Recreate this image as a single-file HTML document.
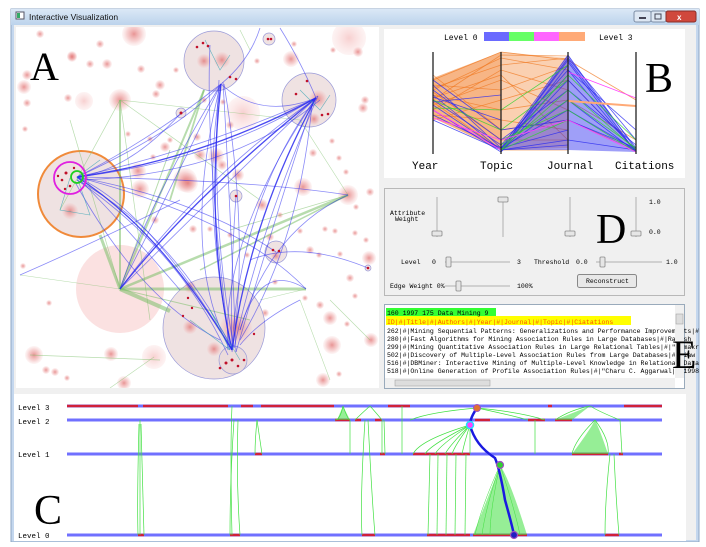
<!DOCTYPE html>
<html><head><meta charset="utf-8"><style>
html,body{margin:0;padding:0;background:#fff;width:706px;height:547px;overflow:hidden}
svg{display:block}
text{font-family:"Liberation Mono",monospace}
</style></head><body>
<svg width="706" height="547" viewBox="0 0 706 547" xmlns="http://www.w3.org/2000/svg">
<defs>
<radialGradient id="pk"><stop offset="0" stop-color="#e07070" stop-opacity=".75"/><stop offset=".6" stop-color="#ec9a9a" stop-opacity=".45"/><stop offset="1" stop-color="#f4c0c0" stop-opacity=".15"/></radialGradient>
<radialGradient id="pk2"><stop offset="0" stop-color="#f0a0a0" stop-opacity=".5"/><stop offset="1" stop-color="#f8d0d0" stop-opacity=".25"/></radialGradient>
<linearGradient id="tb" x1="0" y1="0" x2="0" y2="1"><stop offset="0" stop-color="#dbe8f6"/><stop offset="1" stop-color="#bcd3ec"/></linearGradient>
</defs>
<!-- window frame -->
<rect x="11" y="9" width="688" height="533" fill="#c4d7ee" stroke="#8fa7c4"/>
<rect x="11" y="9" width="688" height="16" fill="url(#tb)"/>
<rect x="16" y="12" width="8" height="7" fill="#fff" stroke="#556"/>
<rect x="17" y="13" width="3" height="5" fill="#3a6"/>
<text x="29" y="20" font-family="Liberation Sans" font-size="8.5" fill="#111" style="font-family:'Liberation Sans',sans-serif">Interactive Visualization</text>
<rect x="634" y="11" width="17" height="11" rx="2" fill="#dde7f3" stroke="#7d8ea6"/>
<rect x="651" y="11" width="15" height="11" rx="2" fill="#dde7f3" stroke="#7d8ea6"/>
<rect x="666" y="11" width="30" height="11" rx="2" fill="#d0483c" stroke="#8a2e28"/>
<text x="677" y="20" font-size="8" fill="#fff" font-weight="bold" style="font-family:'Liberation Sans',sans-serif">x</text>
<rect x="639" y="17" width="7" height="2" fill="#445"/>
<rect x="655" y="14" width="6" height="5" fill="none" stroke="#445"/>
<!-- client background -->
<rect x="14" y="25" width="682" height="515" fill="#f0f0f0"/>

<!-- PANEL A -->
<rect x="16" y="27" width="363" height="361" fill="#fff"/>
<g clip-path="url(#ca)">
<clipPath id="ca"><rect x="16" y="27" width="363" height="361"/></clipPath>
<!-- pink scattered -->
<g fill="url(#pk)">
<circle cx="40" cy="34" r="4"/><circle cx="134" cy="34" r="12"/><circle cx="100" cy="44" r="4"/><circle cx="72" cy="56" r="5"/>
<circle cx="72" cy="57" r="5"/><circle cx="90" cy="64" r="4"/><circle cx="107" cy="64" r="5"/><circle cx="141" cy="69" r="4"/>
<circle cx="27" cy="75" r="5"/><circle cx="24" cy="87" r="7"/><circle cx="160" cy="85" r="5"/><circle cx="156" cy="94" r="4"/>
<circle cx="68" cy="98" r="4"/><circle cx="84" cy="101" r="9" fill="url(#pk2)"/><circle cx="120" cy="100" r="11"/><circle cx="27" cy="103" r="4"/>
<circle cx="243" cy="113" r="17" fill="url(#pk2)"/><circle cx="223" cy="102" r="3"/><circle cx="365" cy="100" r="4"/><circle cx="363" cy="108" r="5"/>
<circle cx="291" cy="59" r="8"/><circle cx="349" cy="38" r="17" fill="url(#pk2)"/><circle cx="358" cy="52" r="5"/><circle cx="333" cy="50" r="3"/><circle cx="257" cy="61" r="3"/><circle cx="294" cy="44" r="3"/>
<circle cx="25" cy="129" r="3"/><circle cx="128" cy="134" r="3"/><circle cx="150" cy="139" r="3"/><circle cx="170" cy="140" r="3"/>
<circle cx="165" cy="147" r="5"/><circle cx="200" cy="155" r="6"/><circle cx="216" cy="156" r="8"/><circle cx="153" cy="157" r="3"/>
<circle cx="313" cy="153" r="4"/><circle cx="339" cy="158" r="3"/><circle cx="332" cy="141" r="3"/><circle cx="346" cy="172" r="3"/>
<circle cx="138" cy="171" r="8"/><circle cx="185" cy="180" r="12"/><circle cx="188" cy="183" r="10"/><circle cx="140" cy="189" r="9"/>
<circle cx="222" cy="165" r="5"/><circle cx="238" cy="175" r="6"/><circle cx="303" cy="187" r="9"/><circle cx="348" cy="195" r="10"/>
<circle cx="370" cy="192" r="4"/><circle cx="356" cy="207" r="3"/><circle cx="262" cy="205" r="6"/><circle cx="280" cy="215" r="3"/>
<circle cx="155" cy="220" r="4"/><circle cx="193" cy="229" r="4"/><circle cx="210" cy="229" r="3"/><circle cx="230" cy="235" r="3"/>
<circle cx="270" cy="237" r="4"/><circle cx="300" cy="231" r="3"/><circle cx="325" cy="229" r="3"/><circle cx="335" cy="231" r="3"/>
<circle cx="355" cy="233" r="3"/><circle cx="366" cy="240" r="3"/><circle cx="310" cy="250" r="4"/><circle cx="319" cy="255" r="3"/>
<circle cx="340" cy="254" r="3"/><circle cx="369" cy="258" r="7"/><circle cx="23" cy="266" r="3"/><circle cx="350" cy="278" r="4"/>
<circle cx="355" cy="296" r="3"/><circle cx="320" cy="305" r="4"/><circle cx="330" cy="318" r="7"/><circle cx="347" cy="324" r="3"/>
<circle cx="371" cy="340" r="7"/><circle cx="332" cy="345" r="9"/><circle cx="49" cy="303" r="3"/><circle cx="34" cy="355" r="9"/>
<circle cx="111" cy="354" r="7"/><circle cx="154" cy="357" r="12" fill="url(#pk2)"/><circle cx="46" cy="370" r="4"/><circle cx="55" cy="372" r="4"/>
<circle cx="67" cy="378" r="3"/><circle cx="124" cy="383" r="7"/><circle cx="323" cy="380" r="7"/><circle cx="339" cy="374" r="3"/>
<circle cx="265" cy="313" r="4"/><circle cx="275" cy="282" r="3"/><circle cx="305" cy="298" r="3"/><circle cx="247" cy="255" r="3"/>
<circle cx="176" cy="70" r="3"/><circle cx="204" cy="100" r="3"/><circle cx="197" cy="137" r="4"/><circle cx="230" cy="125" r="4"/>
</g>
<circle cx="120" cy="289" r="44" fill="#f8c8c8" fill-opacity=".55"/>
<!-- cluster circles -->
<g fill="#e9d8d8" fill-opacity=".75" stroke="#9a9ad8" stroke-width=".7">
<circle cx="214" cy="61" r="30"/><circle cx="309" cy="100" r="27"/><circle cx="214" cy="328" r="51"/>
<circle cx="269" cy="39" r="6"/><circle cx="181" cy="113" r="5"/><circle cx="236" cy="196" r="6"/><circle cx="276" cy="252" r="11"/><circle cx="233" cy="360" r="14"/><circle cx="368" cy="268" r="3"/>
</g>
<circle cx="81" cy="194" r="43" fill="#efe2e2" stroke="#f08a3a" stroke-width="2"/>
<g fill="url(#pk)"><circle cx="222" cy="60" r="8"/><circle cx="204" cy="61" r="7"/><circle cx="318" cy="99" r="9"/><circle cx="314" cy="119" r="6"/><circle cx="236" cy="328" r="16"/><circle cx="190" cy="327" r="7"/><circle cx="214" cy="349" r="7"/><circle cx="70" cy="211" r="8"/><circle cx="190" cy="287" r="6"/><circle cx="276" cy="256" r="5"/></g>
<!-- green edges -->
<g fill="none" stroke="#7cbf6a" stroke-opacity=".55">
<path d="M120 289 L120 100" stroke-width="2"/><path d="M120 289 L306 289" stroke-width="3"/><path d="M120 289 L170 311" stroke-width="4"/><path d="M120 289 L348 195" stroke-width="2.5"/>
<path d="M120 289 L100 235" stroke-width="3"/><path d="M120 289 L204 90" stroke-width="2"/><path d="M120 289 L170 150" stroke-width="1"/><path d="M120 289 L70 120" stroke-width=".7"/>
<path d="M120 289 L20 275" stroke-width=".6"/><path d="M120 289 L250 320" stroke-width="1"/><path d="M120 100 L260 200" stroke-width=".7"/><path d="M120 100 L60 210" stroke-width=".7"/>
<path d="M120 100 L300 120" stroke-width=".6"/><path d="M120 100 L150 320" stroke-width=".7"/><path d="M348 195 L230 230" stroke-width=".8"/><path d="M348 195 L200 270" stroke-width="1.5"/>
<path d="M348 195 L300 120" stroke-width=".6"/><path d="M306 289 L260 300" stroke-width=".6"/><path d="M30 355 L160 360" stroke-width=".8"/><path d="M154 357 L110 388" stroke-width=".6"/>
<path d="M204 90 L170 200" stroke-width="1.8"/><path d="M330 380 L300 300" stroke-width=".6"/><path d="M370 340 L330 300" stroke-width=".6"/><path d="M250 50 L240 30" stroke-width=".6"/>
</g>
<!-- blue edges -->
<g fill="none" stroke="#2a2af0" stroke-width=".8" stroke-opacity=".55">
<path d="M77 177 Q200 150 316 98"/><path d="M77 177 Q220 160 318 96"/><path d="M80 180 Q230 175 320 100"/><path d="M77 177 Q180 130 221 84"/>
<path d="M77 177 Q150 210 232 350"/><path d="M77 180 Q170 230 230 345"/><path d="M77 180 Q180 250 228 355"/><path d="M75 182 Q140 300 220 340"/>
<path d="M77 177 Q250 180 348 195"/><path d="M77 177 Q240 220 306 289"/><path d="M221 84 Q200 200 232 350"/><path d="M219 80 Q210 220 234 348"/>
<path d="M223 82 Q230 200 236 352"/><path d="M220 86 Q180 250 228 346"/><path d="M224 84 Q250 240 232 352"/><path d="M316 98 Q240 200 232 350"/>
<path d="M318 96 Q260 230 234 348"/><path d="M314 100 Q280 200 236 352"/><path d="M316 98 Q220 240 228 350"/><path d="M312 104 Q300 240 240 340"/>
<path d="M120 289 Q200 180 316 98"/><path d="M120 289 Q180 170 221 84"/><path d="M120 289 Q150 200 221 84"/><path d="M120 289 Q250 160 316 98"/>
<path d="M20 275 Q100 240 180 200"/><path d="M348 195 Q270 230 240 330"/><path d="M368 268 Q300 240 250 260"/><path d="M306 289 Q260 260 240 330"/>
<path d="M221 84 Q260 120 316 98"/><path d="M221 84 Q150 140 77 177"/><path d="M77 177 Q120 220 180 290"/><path d="M77 177 Q200 200 276 252"/>
<path d="M236 196 Q230 280 232 350"/><path d="M210 45 Q205 150 230 350"/><path d="M77 177 Q130 170 181 113"/><path d="M300 300 Q260 320 240 345"/>
<path d="M260 28 Q250 60 221 84"/><path d="M280 28 Q300 60 316 98"/>
</g>
<g fill="none" stroke="#2a2af0" stroke-width="1.3" stroke-opacity=".85">
<path d="M77 177 Q200 160 316 98"/><path d="M221 84 Q205 230 232 350"/><path d="M316 98 Q250 220 232 350"/><path d="M120 289 Q190 200 316 98"/><path d="M77 177 Q160 230 232 350"/>
</g>
<g fill="none" stroke="#2aa0b0" stroke-width=".6" stroke-opacity=".7">
<path d="M70 178 L60 210 L90 215 L77 177 L100 160"/><path d="M190 320 L230 350 L210 310 L240 360"/><path d="M205 40 L220 70 L230 55"/><path d="M300 90 L320 110 L330 95"/>
</g>
<!-- red nodes -->
<g fill="#c0102a">
<circle cx="66" cy="173" r="1.5"/><circle cx="62" cy="180" r="1.3"/><circle cx="70" cy="186" r="1.3"/><circle cx="58" cy="176" r="1.2"/><circle cx="74" cy="168" r="1.2"/><circle cx="65" cy="189" r="1.2"/>
<circle cx="203" cy="43" r="1.3"/><circle cx="197" cy="47" r="1.3"/><circle cx="208" cy="46" r="1.3"/><circle cx="230" cy="77" r="1.3"/><circle cx="236" cy="79" r="1.3"/>
<circle cx="307" cy="81" r="1.3"/><circle cx="296" cy="94" r="1.3"/><circle cx="328" cy="114" r="1.3"/><circle cx="322" cy="115" r="1.3"/>
<circle cx="226" cy="363" r="1.5"/><circle cx="232" cy="360" r="1.5"/><circle cx="238" cy="366" r="1.3"/><circle cx="220" cy="368" r="1.3"/><circle cx="244" cy="360" r="1.3"/>
<circle cx="268" cy="39" r="1.3"/><circle cx="271" cy="39" r="1.3"/><circle cx="181" cy="113" r="1.5"/><circle cx="236" cy="196" r="1.3"/><circle cx="273" cy="250" r="1.3"/><circle cx="279" cy="251" r="1.3"/><circle cx="368" cy="268" r="1.3"/>
<circle cx="188" cy="298" r="1.2"/><circle cx="192" cy="308" r="1.2"/><circle cx="183" cy="316" r="1.2"/><circle cx="254" cy="334" r="1.2"/>
</g>
<circle cx="70" cy="178" r="16" fill="none" stroke="#e020e0" stroke-width="1.8"/>
<circle cx="77" cy="177" r="6" fill="none" stroke="#20d020" stroke-width="1.8"/>
</g>
<text x="30" y="80" font-size="40" style="font-family:'Liberation Serif',serif">A</text>

<!-- PANEL B -->
<rect x="384" y="29" width="301" height="149" fill="#fff"/>
<text x="444" y="40" font-size="8">Level 0</text>
<rect x="484" y="32" width="25" height="9" fill="#6a6aff"/><rect x="509" y="32" width="25" height="9" fill="#66ff66"/><rect x="534" y="32" width="25" height="9" fill="#ff66ff"/><rect x="559" y="32" width="26" height="9" fill="#ffaa77"/>
<text x="599" y="40" font-size="8">Level 3</text>
<g fill="none" stroke-width=".8">
<g stroke="#f07820" stroke-opacity=".7">
<path d="M433 80 L501 52 L568 60"/><path d="M433 90 L501 58 L568 70"/><path d="M433 100 L501 55 L568 56"/><path d="M433 110 L501 70 L568 90"/>
<path d="M433 85 L501 90 L568 66"/><path d="M433 95 L501 110 L568 100"/><path d="M433 105 L501 80 L568 110"/><path d="M433 115 L501 120 L568 130"/>
<path d="M433 75 L501 130 L568 120"/><path d="M433 120 L501 100 L568 80"/><path d="M433 88 L501 65 L568 58"/><path d="M433 92 L501 140 L568 140"/>
<path d="M433 98 L501 75 L568 140"/><path d="M433 102 L501 150 L568 150"/><path d="M568 60 L636 100"/><path d="M568 100 L636 140"/><path d="M568 120 L636 150"/><path d="M568 80 L636 150"/>
</g>
<polygon points="433,78 501,52 501,150 433,118" fill="#f07820" fill-opacity=".55" stroke="none"/>
<polygon points="501,52 568,58 568,148 501,150" fill="#f07820" fill-opacity=".35" stroke="none"/>
<g stroke="#2a2af0" stroke-opacity=".8">
<path d="M433 85 L501 148 L568 55 L636 150"/><path d="M433 95 L501 150 L568 60 L636 148"/><path d="M433 100 L501 145 L568 70 L636 152"/><path d="M433 110 L501 152 L568 80 L636 150"/>
<path d="M433 90 L501 140 L568 90 L636 145"/><path d="M433 105 L501 150 L568 100 L636 152"/><path d="M433 115 L501 148 L568 110 L636 150"/><path d="M433 80 L501 130 L568 120 L636 148"/>
<path d="M433 120 L501 150 L568 140 L636 150"/><path d="M501 150 L568 58"/><path d="M501 152 L568 65"/><path d="M501 148 L568 75"/><path d="M501 150 L568 145"/>
<path d="M501 148 L568 130"/><path d="M568 58 L636 140"/><path d="M568 62 L636 152"/><path d="M568 70 L636 130"/><path d="M433 97 L501 120"/><path d="M433 102 L501 95"/>
</g>
<polygon points="501,150 568,55 636,152 568,150" fill="#2a2af0" fill-opacity=".45" stroke="none"/>
<g stroke="#30d030" stroke-opacity=".8">
<path d="M501 150 L568 90 L636 150"/><path d="M501 145 L568 100 L636 148"/><path d="M501 140 L568 110 L636 152"/><path d="M501 150 L568 120"/><path d="M433 100 L501 130 L568 80"/><path d="M501 150 L568 75 L636 140"/><path d="M433 108 L501 110 L568 65"/>
</g>
<g stroke="#ff40ff"><path d="M433 118 L501 140 L568 120 L636 152"/><path d="M568 72 L636 98"/><path d="M433 110 L501 150"/></g>
<path d="M568 101 L636 106" stroke="#ffaa77" stroke-width="2"/>
</g>
<g stroke="#222" stroke-width="1.3"><line x1="433" y1="52" x2="433" y2="154"/><line x1="501" y1="52" x2="501" y2="154"/><line x1="568" y1="52" x2="568" y2="154"/><line x1="636" y1="52" x2="636" y2="154"/></g>
<g font-size="11"><text x="412" y="169">Year</text><text x="480" y="169">Topic</text><text x="547" y="169">Journal</text><text x="615" y="169">Citations</text></g>
<text x="645" y="92" font-size="42" style="font-family:'Liberation Serif',serif">B</text>

<!-- PANEL D -->
<rect x="384.5" y="188.5" width="300" height="107" fill="#f0f0f0" stroke="#b8b8b8"/>
<g stroke="#b0b0b0"><line x1="437" y1="197" x2="437" y2="237"/><line x1="503" y1="197" x2="503" y2="237"/><line x1="570" y1="197" x2="570" y2="237"/><line x1="636" y1="197" x2="636" y2="237"/></g>
<g fill="#e6e6e6" stroke="#888" stroke-width=".8"><rect x="432" y="231" width="10" height="5" rx="1"/><rect x="498" y="197" width="10" height="5" rx="1"/><rect x="565" y="231" width="10" height="5" rx="1"/><rect x="631" y="231" width="10" height="5" rx="1"/></g>
<g font-size="6.5"><text x="390" y="215">Attribute</text><text x="395" y="221">Weight</text>
<text x="649" y="204">1.0</text><text x="649" y="234">0.0</text>
<text x="401" y="264">Level</text><text x="432" y="264">0</text><text x="517" y="264">3</text>
<text x="534" y="264">Threshold</text><text x="576" y="264">0.0</text><text x="666" y="264">1.0</text>
<text x="390" y="288">Edge Weight 0%</text><text x="517" y="288">100%</text></g>
<g stroke="#b0b0b0"><line x1="445" y1="262" x2="510" y2="262"/><line x1="596" y1="262" x2="662" y2="262"/><line x1="445" y1="286" x2="510" y2="286"/></g>
<g fill="#e6e6e6" stroke="#888" stroke-width=".8"><rect x="446" y="257" width="5" height="10" rx="1"/><rect x="600" y="257" width="5" height="10" rx="1"/><rect x="456" y="281" width="5" height="10" rx="1"/></g>
<rect x="577.5" y="274.5" width="59" height="13" rx="2" fill="#e8e8e8" stroke="#888"/>
<text x="586" y="283" font-size="6.5">Reconstruct</text>
<text x="596" y="243" font-size="42" style="font-family:'Liberation Serif',serif">D</text>

<!-- PANEL E -->
<rect x="384.5" y="304.5" width="300" height="84" fill="#fff" stroke="#9ab"/>
<rect x="386" y="308" width="110" height="8" fill="#33ff33"/>
<rect x="386" y="316" width="245" height="9" fill="#ffff00"/>
<g font-size="6.5"><text x="387" y="315">160 1997 175 Data Mining 9</text>
<text x="387" y="324" fill="#ff5500">ID|#|Title|#|Authors|#|Year|#|Journal|#|Topic|#|Ciatations</text>
<text x="387" y="333">262|#|Mining Sequential Patterns: Generalizations and Performance Improvements|#</text>
<text x="387" y="341">280|#|Fast Algorithms for Mining Association Rules in Large Databases|#|Rakesh</text>
<text x="387" y="349">299|#|Mining Quantitative Association Rules in Large Relational Tables|#|"Ramakr</text>
<text x="387" y="357">502|#|Discovery of Multiple-Level Association Rules from Large Databases|#|Jiaw</text>
<text x="387" y="365">516|#|DBMiner: Interactive Mining of Multiple-Level Knowledge in Relational Data</text>
<text x="387" y="373">518|#|Online Generation of Profile Association Rules|#|"Charu C. Aggarwal|#|1998</text></g>
<rect x="675" y="305" width="9" height="73" fill="#f0f0f0"/><rect x="676" y="314" width="7" height="10" fill="#ddd" stroke="#999" stroke-width=".5"/>
<rect x="385" y="378" width="290" height="10" fill="#f0f0f0"/><rect x="395" y="380" width="95" height="6" fill="#ddd" stroke="#999" stroke-width=".5"/>
<text x="672" y="368" font-size="40" style="font-family:'Liberation Serif',serif">E</text>

<!-- PANEL C -->
<rect x="14" y="394" width="672" height="147" fill="#fff"/>
<g font-size="7.5"><text x="18" y="410">Level 3</text><text x="18" y="424">Level 2</text><text x="18" y="457">Level 1</text><text x="18" y="538">Level 0</text></g>
<g stroke="#7070ff" stroke-width="3"><line x1="67" y1="406" x2="662" y2="406"/><line x1="67" y1="420" x2="662" y2="420"/><line x1="67" y1="454" x2="662" y2="454"/><line x1="67" y1="535" x2="662" y2="535"/></g>
<g stroke="#d0203a" stroke-width="2.5">
<line x1="67" y1="406" x2="138" y2="406"/><line x1="143" y1="406" x2="228" y2="406"/><line x1="241" y1="406" x2="253" y2="406"/><line x1="261" y1="406" x2="334" y2="406"/><line x1="388" y1="406" x2="410" y2="406"/><line x1="548" y1="406" x2="552" y2="406"/><line x1="624" y1="406" x2="662" y2="406"/>
<line x1="335" y1="420" x2="350" y2="420"/><line x1="355" y1="420" x2="361" y2="420"/><line x1="375" y1="420" x2="382" y2="420"/><line x1="475" y1="420" x2="490" y2="420"/><line x1="528" y1="420" x2="545" y2="420"/><line x1="555" y1="420" x2="572" y2="420"/>
<line x1="255" y1="454" x2="262" y2="454"/><line x1="380" y1="454" x2="385" y2="454"/><line x1="413" y1="454" x2="470" y2="454"/><line x1="572" y1="454" x2="608" y2="454"/><line x1="619" y1="454" x2="623" y2="454"/>
<line x1="138" y1="535" x2="144" y2="535"/><line x1="230" y1="535" x2="240" y2="535"/><line x1="362" y1="535" x2="375" y2="535"/><line x1="427" y1="535" x2="470" y2="535"/><line x1="473" y1="535" x2="527" y2="535"/><line x1="605" y1="535" x2="619" y2="535"/>
</g>
<g fill="none" stroke="#40e040" stroke-width=".7">
<path d="M140 420 L140 535"/><path d="M139 424 Q137 500 138 535"/><path d="M141 424 Q143 500 144 535"/>
<path d="M232 406 Q230 450 232 535"/><path d="M238 420 Q236 480 240 535"/><path d="M234 420 Q230 480 230 535"/><path d="M257 420 Q255 440 255 454"/><path d="M257 420 Q260 440 262 454"/>
<path d="M343 406 Q340 420 335 420"/><path d="M343 406 Q348 420 350 420"/><path d="M370 406 Q360 415 355 420"/><path d="M370 406 Q378 415 382 420"/><path d="M350 420 L350 454"/>
<path d="M365 420 Q360 500 362 535"/><path d="M368 420 Q372 500 375 535"/><path d="M382 420 L382 454"/><path d="M384 420 L385 454"/><path d="M402 406 L402 454"/>
<path d="M477 408 Q430 412 410 420"/><path d="M477 408 Q520 412 545 420"/><path d="M477 408 Q510 415 528 420"/>
<path d="M470 425 Q420 440 413 454"/><path d="M470 425 Q430 445 425 454"/><path d="M470 425 Q440 445 435 454"/><path d="M470 425 Q450 445 445 454"/><path d="M470 425 Q455 445 452 454"/><path d="M470 425 Q465 440 462 454"/><path d="M470 425 L470 454"/>
<path d="M430 454 L428 535"/><path d="M438 454 L437 535"/><path d="M447 454 L446 535"/><path d="M456 454 L455 535"/><path d="M466 454 L465 535"/>
<path d="M535 420 L535 454"/><path d="M590 406 Q570 410 555 420"/><path d="M590 406 Q600 412 620 420"/><path d="M595 420 Q575 440 572 454"/><path d="M595 420 Q610 440 608 454"/><path d="M620 420 L622 454"/>
<path d="M610 454 Q605 500 605 535"/><path d="M614 454 Q616 500 619 535"/>
</g>
<g fill="#40e040" fill-opacity=".55">
<path d="M337 420 L343 406 L350 420 Z"/><path d="M555 420 L590 406 L572 420 Z"/>
<path d="M572 454 Q590 430 595 420 Q600 430 608 454 Z"/>
<path d="M473 535 Q495 480 500 465 Q510 480 527 535 Z"/>
</g>
<g fill="none" stroke="#40e040" stroke-width=".5">
<path d="M500 465 Q480 510 475 535"/><path d="M500 465 Q485 510 482 535"/><path d="M500 465 Q490 510 490 535"/><path d="M500 465 Q515 510 520 535"/>
</g>
<path d="M477 408 Q470 418 470 425 Q475 445 495 458 Q500 470 505 500 Q512 525 514 535" fill="none" stroke="#1a1ae0" stroke-width="2.5"/>
<circle cx="477" cy="408" r="3.5" fill="#e07030" stroke="#a050c0"/>
<circle cx="470" cy="425" r="3.5" fill="#ff40ff" stroke="#20e0ff" stroke-width="1.5"/>
<circle cx="500" cy="465" r="3.5" fill="#30d030" stroke="#a050c0" stroke-width="1.2"/>
<circle cx="514" cy="535" r="3.5" fill="#2020c0" stroke="#a050c0" stroke-width="1.2"/>
<text x="34" y="524" font-size="42" style="font-family:'Liberation Serif',serif">C</text>
<rect x="0" y="542" width="706" height="5" fill="#fff"/>
</svg>
</body></html>
